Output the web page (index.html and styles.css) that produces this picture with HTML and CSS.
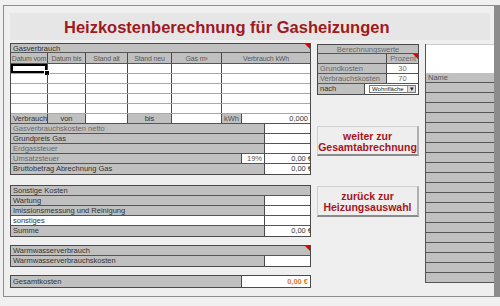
FILE: index.html
```html
<!DOCTYPE html>
<html lang="de">
<head>
    <meta charset="UTF-8">
    <title>Heizkostenberechnung</title>
    <link rel="stylesheet" href="styles.css">
</head>
<body>
<div class="frame">
    <div class="title">Heizkostenberechnung für Gasheizungen</div>

    <div class="main">
        <!-- linke Tabelle -->
        <div class="left">
            <div class="box">
                <div class="row h9"><div class="c g full note">Gasverbrauch</div></div>
                <div class="row h11 head">
                    <div class="c g w1">Datum vom</div>
                    <div class="c g w2">Datum bis</div>
                    <div class="c g w3">Stand alt</div>
                    <div class="c g w4">Stand neu</div>
                    <div class="c g w5">Gas m³</div>
                    <div class="c g wr">Verbrauch kWh</div>
                </div>
                <div class="row data">
                    <div class="c w1 sel"></div><div class="c w2"></div><div class="c w3"></div><div class="c w4"></div><div class="c w5"></div><div class="c wr"></div>
                </div>
                <div class="row data">
                    <div class="c w1"></div><div class="c w2"></div><div class="c w3"></div><div class="c w4"></div><div class="c w5"></div><div class="c wr"></div>
                </div>
                <div class="row data">
                    <div class="c w1"></div><div class="c w2"></div><div class="c w3"></div><div class="c w4"></div><div class="c w5"></div><div class="c wr"></div>
                </div>
                <div class="row data">
                    <div class="c w1"></div><div class="c w2"></div><div class="c w3"></div><div class="c w4"></div><div class="c w5"></div><div class="c wr"></div>
                </div>
                <div class="row data">
                    <div class="c w1"></div><div class="c w2"></div><div class="c w3"></div><div class="c w4"></div><div class="c w5"></div><div class="c wr"></div>
                </div>
                <div class="row">
                    <div class="c g w1">Verbrauch</div>
                    <div class="c g w2 ctr">von</div>
                    <div class="c w3"></div>
                    <div class="c g w4 ctr">bis</div>
                    <div class="c w5"></div>
                    <div class="c g kwh">kWh</div>
                    <div class="c wr num">0,000</div>
                </div>
                <div class="row"><div class="c g lab light">Gasverbrauchskosten netto</div><div class="c wr"></div></div>
                <div class="row"><div class="c g lab">Grundpreis Gas</div><div class="c wr"></div></div>
                <div class="row"><div class="c g lab light">Erdgassteuer</div><div class="c wr"></div></div>
                <div class="row">
                    <div class="c g lab2 light">Umsatzsteuer</div>
                    <div class="c pct num">19%</div>
                    <div class="c wr num"><span class="cut">0,00 €</span></div>
                </div>
                <div class="row last"><div class="c g lab">Bruttobetrag Abrechnung Gas</div><div class="c wr num"><span class="cut">0,00 €</span></div></div>
            </div>

            <div class="box gap10">
                <div class="row"><div class="c g full">Sonstige Kosten</div></div>
                <div class="row"><div class="c g lab">Wartung</div><div class="c wr"></div></div>
                <div class="row"><div class="c g lab">Imissionsmessung und Reinigung</div><div class="c wr"></div></div>
                <div class="row"><div class="c lab">sonstiges</div><div class="c wr"></div></div>
                <div class="row last"><div class="c g lab">Summe</div><div class="c wr num"><span class="cut">0,00 €</span></div></div>
            </div>

            <div class="box gap8">
                <div class="row"><div class="c g full note">Warmwasserverbrauch</div></div>
                <div class="row last"><div class="c g lab">Warmwasserverbrauchskosten</div><div class="c wr"></div></div>
            </div>

            <div class="box gap8">
                <div class="row last h11">
                    <div class="c g lab2">Gesamtkosten</div>
                    <div class="c wr num total">0,00 €</div>
                </div>
            </div>
        </div>

        <!-- mittlere Spalte -->
        <div class="mid">
            <div class="box">
                <div class="row h9"><div class="c g full ctr light">Berechnungswerte</div></div>
                <div class="row"><div class="c g mlab"></div><div class="c g wr num light note">Prozent</div></div>
                <div class="row"><div class="c g mlab light">Grundkosten</div><div class="c wr ctr light">30</div></div>
                <div class="row"><div class="c g mlab light">Verbrauchskosten</div><div class="c wr ctr light">70</div></div>
                <div class="row last">
                    <div class="c g nach">nach</div>
                    <div class="c wr sel-wrap">
                        <div class="select"><span>Wohnfläche</span><span class="arrow">▾</span></div>
                    </div>
                </div>
            </div>

            <div class="btn first">weiter zur<br>Gesamtabrechnung</div>
            <div class="btn second">zurück zur<br>Heizungsauswahl</div>
        </div>

        <!-- rechte Spalte -->
        <div class="right">
            <div class="blank"></div>
            <div class="rrow">Name</div>
            <div class="rrow"></div><div class="rrow"></div><div class="rrow"></div><div class="rrow"></div>
            <div class="rrow"></div><div class="rrow"></div><div class="rrow"></div><div class="rrow"></div>
            <div class="rrow"></div><div class="rrow"></div><div class="rrow"></div><div class="rrow"></div>
            <div class="rrow"></div><div class="rrow"></div><div class="rrow"></div><div class="rrow"></div>
            <div class="rrow"></div><div class="rrow"></div><div class="rrow"></div><div class="rrow"></div>
        </div>
    </div>
</div>
</body>
</html>
```

FILE: styles.css
```css
* {
    box-sizing: border-box;
}
body {
    margin: 0;
    background-color: #f0f0f0;
    font-family: "Liberation Sans", Arial, sans-serif;
    font-size: 7.5px;
    color: #333;
}
.frame {
    margin: 5px 0 0 3px;
    width: 497px;
    height: 292px;
    border: 1px solid #8c8c8c;
    border-right: 6px solid #8c8c8c;
    background-color: #efefef;
    padding: 7px 0 0 6px;
}
.title {
    width: 480px;
    height: 27px;
    background-color: #e6e6e6;
    color: #9e1a1e;
    font-size: 16.5px;
    font-weight: bold;
    padding-left: 54px;
    line-height: 29px;
    margin-bottom: 3px;
}
.main {
    display: flex;
    align-items: flex-start;
}

/* Tabellen */
.box {
    border: 1px solid #4a4a4a;
    background-color: #fff;
}
.gap10 { margin-top: 10px; }
.gap8 { margin-top: 8px; }

.row {
    display: flex;
    height: 10px;
    border-bottom: 1px solid #555;
}
.row.last { border-bottom: none; }
.row.h9 { height: 9px; }
.row.h11 { height: 11px; }
.row.data { border-bottom: 1px solid #a8a8a8; }

.c {
    position: relative;
    height: 100%;
    padding: 0 2px;
    line-height: 9px;
    white-space: nowrap;
    overflow: hidden;
    border-right: 1px solid #4a4a4a;
}
.c:last-child { border-right: none; }
.g { background-color: #c0c0c0; }
.full { flex: 1; }
.ctr { text-align: center; }
.num { text-align: right; }
.light { color: #6a6a6a; }
.head .c {
    text-align: center;
    color: #5a5a5a;
    font-size: 7px;
    letter-spacing: -0.15px;
    line-height: 10px;
    padding: 0;
}
.h11 .c { line-height: 11px; }

.w1 { width: 37px; }
.w2 { width: 38px; }
.w3 { width: 42px; }
.w4 { width: 44px; }
.w5 { width: 50px; }
.wr { flex: 1; }
.kwh { width: 20px; text-align: center; color: #555; padding: 0 1px; }
.lab { width: 254px; }
.lab2 { width: 231px; }
.pct { width: 23px; border-right: 1px solid #4a4a4a; color: #555; }

.cut {
    margin-right: -4px;
}
.total {
    color: #e07a22;
    font-weight: bold;
}

/* Markierung und Kommentarecke */
.sel {
    box-shadow: inset 0 0 0 2px #000;
    overflow: visible;
}
.sel::after {
    content: "";
    position: absolute;
    right: -3px;
    bottom: -3px;
    width: 4px;
    height: 4px;
    background-color: #000;
    border: 1px solid #fff;
}
.note::after {
    content: "";
    position: absolute;
    top: 0;
    right: 0;
    border-top: 5px solid #e00000;
    border-left: 5px solid transparent;
}

.left {
    width: 301px;
}

/* mittlere Spalte */
.mid {
    width: 102px;
    margin-left: 6px;
    margin-top: 1px;
}
.mlab { width: 69px; }
.nach { width: 47px; }
.sel-wrap {
    padding: 1px 2px 0 4px;
}
.select {
    display: flex;
    height: 8px;
    border: 1px solid #777;
    background-color: #fff;
    font-size: 6px;
    line-height: 6px;
    color: #222;
}
.select span:first-child {
    flex: 1;
    padding-left: 2px;
    overflow: hidden;
}
.arrow {
    width: 8px;
    background-color: #ddd;
    border-left: 1px solid #999;
    text-align: center;
    font-size: 7px;
}

.btn {
    height: 30px;
    background-color: #eeeeee;
    border: 1px solid #cfcfcf;
    border-bottom: 2px solid #8a8a8a;
    border-right: 2px solid #b0b0b0;
    color: #a3161d;
    font-size: 10.5px;
    font-weight: bold;
    text-align: center;
    line-height: 11px;
    padding-top: 4px;
}
.btn.first { margin-top: 31px; }
.btn.second { margin-top: 30px; height: 31px; }

/* rechte Spalte */
.right {
    width: 69px;
    margin-left: 6px;
    margin-top: 1px;
    border-left: 1px solid #555;
}
.blank {
    height: 29px;
    background-color: #fff;
    border-top: 1px solid #ccc;
}
.rrow {
    height: 10px;
    background-color: #c0c0c0;
    border-bottom: 1px solid #555;
    padding-left: 2px;
    line-height: 9px;
    color: #555;
}
```
